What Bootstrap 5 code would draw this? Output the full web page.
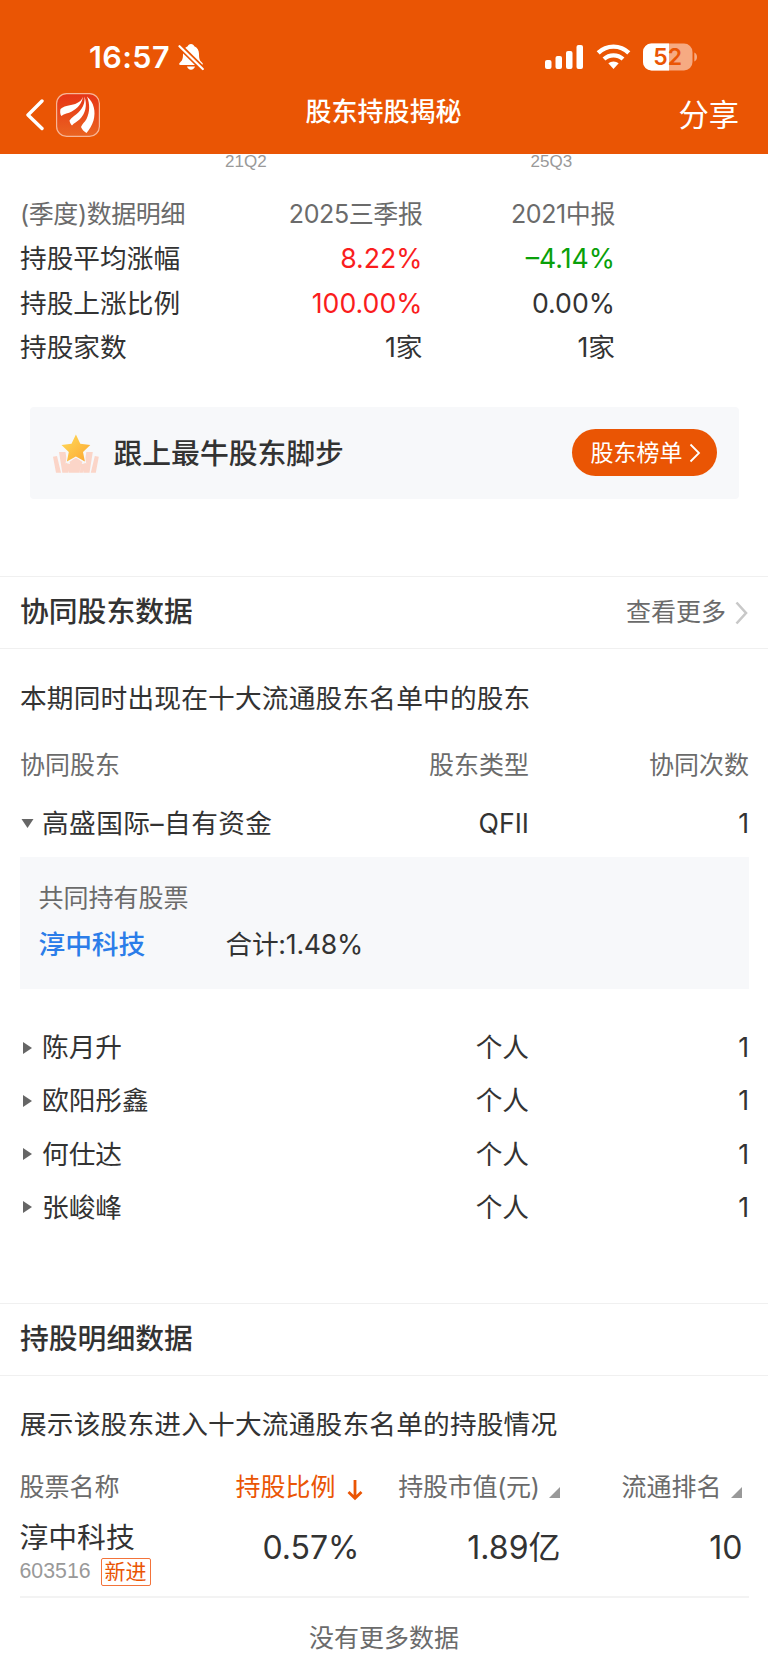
<!DOCTYPE html>
<html lang="zh-CN">
<head>
<meta charset="utf-8">
<meta name="viewport" content="width=device-width, initial-scale=1">
<title>股东持股揭秘</title>
<link href="https://cdn.jsdelivr.net/npm/bootstrap@5.3.0/dist/css/bootstrap.min.css" rel="stylesheet">
<style>
  :root { --brand: #ea5504; --ink: #333; --dim: #6b6b6b; --soft: #999; --panel: #f7f8fa; --rule: #f0f0f0; }
  body { font-family: Inter, "Noto Sans CJK SC", sans-serif; font-size: 26.7px; line-height: 1; color: var(--ink); background: #fff; overflow-x: hidden; }
  svg { display: block; flex: none; }
  .app-header { height: 154px; background: var(--brand); color: #fff; }
  .status-bar { height: 76px; padding: 38px 70px 0 89px; }
  .clock { font-size: 30.5px; font-weight: 600; letter-spacing: .4px; }
  .title-bar { height: 78px; padding: 0 29px 0 25px; display: grid; grid-template-columns: 1fr auto 1fr; }
  .page-title { font-size: 26px; font-weight: 500; padding: 0 0 6px 3px; }
  .share-link { font-size: 30.3px; }
  .axis { height: 38px; font: 17px/15px "Liberation Sans", sans-serif; color: var(--soft); }
  .axis span { width: 42px; }
  .dim { color: var(--dim); font-size: 25px; }
  .quarter { display: grid; grid-template-columns: 182px 220.5px 192.5px; padding-left: 20px; grid-auto-rows: 44.4px; align-items: center; white-space: nowrap; }
  .quarter .dim { letter-spacing: -.4px; }
  .rise { color: #fa1d1d; } .fall { color: #09a009; }
  .promo { margin: 37px 29.5px 0; height: 92px; background: var(--panel); border-radius: 4px; padding: 0 21.5px 0 23px; }
  .promo-text { font-size: 28.8px; font-weight: 500; margin: 3px 0 0 14px; }
  .promo-btn { width: 145px; height: 47px; background: var(--brand); color: #fff; font-size: 23px; line-height: 1; border: 0; padding: 1px 0 0 2px; }
  .section-bar { height: 73px; border-top: 1.5px solid var(--rule); border-bottom: 1.5px solid var(--rule); padding: 0 20px; }
  .section-bar h2 { font-size: 28.8px; font-weight: 500; line-height: 1; margin: 0; }
  .intro { padding-left: 20px; white-space: nowrap; letter-spacing: .18px; }
  .peer { display: grid; grid-template-columns: 1fr 200px 220px; align-items: center; padding: 0 19px 0 20px; height: 53.2px; }
  .peer svg { width: 14px; margin-right: 8px; }
  .wide-name { letter-spacing: .4px; }
  .shared { margin: 7px 19.5px 31.5px; height: 132px; background: var(--panel); padding: 18px 20px 0 19px; }
  .shared > div { height: 46px; }
  .stock-link { color: #2b7de9; font-weight: 500; width: 187px; text-decoration: none; }
  .total { letter-spacing: -.25px; }
  .holding { display: grid; grid-template-columns: 201px 143px 197px 181px; align-items: center; margin: 0 19.5px; white-space: nowrap; }
  .figure-num { font-size: 32px; padding-bottom: 13px; }
  .stock-name { font-size: 28.8px; }
  .code { font: 21.3px/1 "Liberation Sans", sans-serif; color: var(--soft); }
  .tag-new { border: 1.5px solid #f3733a; border-radius: 2px; color: var(--brand); font-size: 21px; width: 50px; height: 28px; margin-left: 10px; }
</style>
</head>
<body>
<header class="app-header">
  <div class="status-bar d-flex align-items-center">
    <span class="clock">16:57</span>
    <svg class="ms-2" width="26" height="28" viewBox="0 0 26 28"><path d="M13 1c-1.700 0-3 1-3.300 2.300C6.500 4.500 5 7.500 5 11c0 5-.8 6.500-2.700 8.200C.5 20.800 1 22 2.500 22h21c1.500 0 2-1.200.2-2.800C21.800 17.500 21 16 21 11c0-3.500-1.500-6.500-4.700-7.700C16 2 14.700 1 13 1zM9 23.500c.5 1.800 2.100 3.200 4 3.200s3.500-1.400 4-3.200z" fill="#fff"/><path d="M2.200 3.800 24.500 25.600" stroke="#ea5504" stroke-width="5.600"/><path d="M1.500 3.200 24.800 26" stroke="#fff" stroke-width="2.200" stroke-linecap="round"/></svg>
    <svg class="ms-auto" width="39" height="26" viewBox="0 0 39 26" fill="#fff"><rect x="0" y="16" width="6.500" height="9" rx="2"/><rect x="10.500" y="12" width="6.500" height="13" rx="2"/><rect x="21" y="7" width="6.500" height="18" rx="2"/><rect x="31.500" y="1" width="6.500" height="24" rx="2"/></svg>
    <svg style="margin-left:12px" width="35" height="26" viewBox="0 0 35 26" fill="none" stroke="#fff"><path d="M2.200 8.800a22 22 0 0 1 30.600 0" stroke-width="4.400"/><path d="M8 15a14 14 0 0 1 19 0" stroke-width="4.200"/><path d="M12.300 19.300a8 8 0 0 1 10.400 0L17.500 25z" fill="#fff" stroke="none"/></svg>
    <svg style="margin-left:12px" width="55" height="28" viewBox="0 0 55 28"><defs><clipPath id="charge"><path d="M0 0h26v28H0z"/></clipPath></defs><rect x="0" y=".5" width="49.500" height="27" rx="8.500" fill="#f6aa82"/><rect x="0" y=".5" width="49.500" height="27" rx="8.500" fill="#fff" clip-path="url(#charge)"/><path d="M51.300 9.500c3.600 1 3.600 8 0 9z" fill="#f6aa82"/><text x="24.700" y="22.200" text-anchor="middle" font-family="Inter" font-weight="600" font-size="23" fill="#ea5504">52</text></svg>
  </div>
  <div class="title-bar align-items-center">
    <div class="d-flex align-items-center">
      <svg width="20" height="32" viewBox="0 0 20 32" fill="none" stroke="#fff" stroke-width="3.400" stroke-linecap="round" stroke-linejoin="round"><path d="M17 2 3 16l14 13.500"/></svg>
      <svg style="margin-left:11px" width="44" height="44" viewBox="0 0 44 44"><defs><linearGradient id="logo" x2="0" y2="1"><stop stop-color="#e63416"/><stop offset="1" stop-color="#ea6420"/></linearGradient></defs><rect x=".6" y=".6" width="42.800" height="42.800" rx="10" fill="url(#logo)" stroke="#f8b596" stroke-width="1.200"/><g fill="#fff"><path d="M27 3.500C26 8 21 11 15 12 10 12.700 6.500 14 4.500 16c-.6 2.500-.4 5 .8 7 3-2.500 7-2.500 10.500-4.500C21 15.500 26 11 27 3.500z"/><path d="M28.500 3.500c1 10-5 15.500-10.500 19.500-2 1.500-3.500 3-4.500 4.500.3 2 1.200 3.700 2.500 5 2-2.500 5-3.700 7.500-6C29.500 21 31.500 12 28.500 3.500z"/><path d="M31 3.500c7 6 9 15 6.500 24C36 32.500 33.500 36.500 30.500 40c-2.500-1.500-4.500-3.500-5.500-6 1-3 3.800-4.700 5.500-8C34 19 34 11 31 3.500z"/></g></svg>
    </div>
    <div class="page-title">股东持股揭秘</div>
    <div class="share-link text-end">分享</div>
  </div>
</header>

<main>
  <div class="axis d-flex"><span style="margin-left:225px">21Q2</span><span style="margin-left:263.500px">25Q3</span></div>

  <section class="quarter">
    <span class="dim">(季度)数据明细</span><span class="dim text-end">2025三季报</span><span class="dim text-end">2021中报</span>
    <span>持股平均涨幅</span><span class="rise text-end">8.22%</span><span class="fall text-end">–4.14%</span>
    <span>持股上涨比例</span><span class="rise text-end">100.00%</span><span class="text-end">0.00%</span>
    <span>持股家数</span><span class="text-end">1家</span><span class="text-end">1家</span>
  </section>

  <section class="promo d-flex align-items-center">
    <svg width="47" height="42" viewBox="0 0 47 42"><defs><linearGradient id="gold" x2="1" y2="1"><stop stop-color="#ffdc5c"/><stop offset="1" stop-color="#fca62f"/></linearGradient></defs><path d="M0 24.700 4 24l4 16.700H3zM6 20h6.500L15.500 40.700H9.300zM45.800 24.700 41.800 24l-4 16.700h5zM39.800 20h-6.500L30.300 40.700h6.200zM12.500 31l4.500 1 2.500 8.700H16zM33.300 31l-4.500 1-2.500 8.700h3.500zM16.500 30l6.400-5 6.400 5-2.800 10.700h-7.200z" fill="#fbd5c8"/><path d="M22.900 2.500 27.300 11.800 37.300 13 30 20l1.900 9.500-9-4.900-9 4.900L15.800 20 8.500 13l10-1.200z" fill="#f7f8fa" stroke="#f7f8fa" stroke-width="2"/><path d="M22.900 2.500 27.300 11.800 37.300 13 30 20l1.900 9.500-9-4.900-9 4.900L15.800 20 8.500 13l10-1.200z" fill="url(#gold)"/></svg>
    <span class="promo-text">跟上最牛股东脚步</span>
    <button class="promo-btn btn rounded-pill ms-auto d-flex align-items-center justify-content-center" type="button">股东榜单<svg style="margin-left:6px" width="12" height="20" viewBox="0 0 12 20" fill="none" stroke="#fff" stroke-width="1.800"><path d="m1.500 1.500 8.500 8.500-8.500 8.500"/></svg></button>
  </section>

  <section style="margin-top:77.800px">
    <div class="section-bar d-flex align-items-center justify-content-between">
      <h2>协同股东数据</h2>
      <div class="dim d-flex align-items-center">查看更多<svg style="margin-left:9px" width="13" height="24" viewBox="0 0 13 24" fill="none" stroke="#c8c8c8" stroke-width="2.600"><path d="m1.500 1.500 9.500 10.500-9.500 10.500"/></svg></div>
    </div>
    <div class="intro" style="padding-top:36px">本期同时出现在十大流通股东名单中的股东</div>
    <div class="peer dim" style="margin-top:27px"><span>协同股东</span><span class="text-end">股东类型</span><span class="text-end">协同次数</span></div>
    <div class="peer" style="margin-top:5px"><span class="wide-name d-flex align-items-center"><svg height="12" viewBox="0 0 14 12"><path d="M1.500 1h12L7.500 10z" fill="#666"/></svg>高盛国际–自有资金</span><span class="text-end">QFII</span><span class="text-end">1</span></div>
    <div class="shared">
      <div class="dim d-flex align-items-center">共同持有股票</div>
      <div class="d-flex align-items-center"><a class="stock-link" href="#">淳中科技</a><span class="total">合计:1.48%</span></div>
    </div>
    <div class="peer"><span class="d-flex align-items-center"><svg height="14" viewBox="0 0 14 14"><path d="M3 1v12l9-6z" fill="#666"/></svg>陈月升</span><span class="text-end">个人</span><span class="text-end">1</span></div>
    <div class="peer"><span class="d-flex align-items-center"><svg height="14" viewBox="0 0 14 14"><path d="M3 1v12l9-6z" fill="#666"/></svg>欧阳彤鑫</span><span class="text-end">个人</span><span class="text-end">1</span></div>
    <div class="peer"><span class="d-flex align-items-center"><svg height="14" viewBox="0 0 14 14"><path d="M3 1v12l9-6z" fill="#666"/></svg>何仕达</span><span class="text-end">个人</span><span class="text-end">1</span></div>
    <div class="peer"><span class="d-flex align-items-center"><svg height="14" viewBox="0 0 14 14"><path d="M3 1v12l9-6z" fill="#666"/></svg>张峻峰</span><span class="text-end">个人</span><span class="text-end">1</span></div>
  </section>

  <section style="margin-top:69px">
    <div class="section-bar d-flex align-items-center"><h2>持股明细数据</h2></div>
    <div class="intro" style="padding-top:35.500px">展示该股东进入十大流通股东名单的持股情况</div>
    <div class="holding dim" style="height:50px;margin-top:25px">
      <span>股票名称</span>
      <span class="d-flex align-items-center justify-content-end" style="color:var(--brand)">持股比例<svg style="margin:4px 0 0 10px" width="18" height="22" viewBox="0 0 18 22" fill="none" stroke="#ea5504" stroke-width="2.800"><path d="M9 1v18M2.500 13 9 19.300 15.500 13"/></svg></span>
      <span class="d-flex align-items-center justify-content-end" style="letter-spacing:-.3px">持股市值(元)<svg style="margin:9px 1px 0 9px" width="11" height="11"><path d="M11 0v11H0z" fill="#999"/></svg></span>
      <span class="d-flex align-items-center justify-content-end">流通排名<svg style="margin:9px 0 0 9px" width="11" height="11"><path d="M11 0v11H0z" fill="#999"/></svg></span>
    </div>
    <div class="holding" style="height:85.500px;border-bottom:2px solid #f3f3f3">
      <div>
        <div class="stock-name">淳中科技</div>
        <div class="d-flex align-items-center" style="margin-top:5px"><span class="code">603516</span><span class="tag-new d-flex align-items-center justify-content-center">新进</span></div>
      </div>
      <span class="figure-num text-end" style="padding-right:4px">0.57%</span><span class="figure-num text-end">1.89亿</span><span class="figure-num text-end" style="margin-right:-1px">10</span>
    </div>
    <div class="dim text-center" style="padding-top:28px">没有更多数据</div>
  </section>
</main>
<script src="https://cdn.jsdelivr.net/npm/bootstrap@5.3.0/dist/js/bootstrap.bundle.min.js"></script>
</body>
</html>
